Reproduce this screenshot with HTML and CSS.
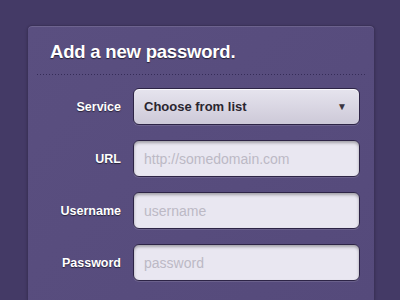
FILE: index.html
```html
<!DOCTYPE html>
<html lang="en">
<head>
    <meta charset="UTF-8">
    <title>Add a new password</title>
    <link rel="stylesheet" href="styles.css">
</head>
<body>
    <div class="panel">
        <h1>Add a new password.</h1>
        <div class="divider"></div>
        <form class="fields">
            <label>Service</label>
            <div class="select">
                <span>Choose from list</span>
                <span class="arrow">&#9660;</span>
            </div>

            <label>URL</label>
            <input type="text" placeholder="http://somedomain.com">

            <label>Username</label>
            <input type="text" placeholder="username">

            <label>Password</label>
            <input type="password" placeholder="password">
        </form>
    </div>
</body>
</html>
```

FILE: styles.css
```css
body {
    margin: 0;
    padding: 25px 25px 0 27px;
    height: 300px;
    box-sizing: border-box;
    overflow: hidden;
    background: #443a66;
    font-family: "Liberation Sans", Arial, sans-serif;
}

.panel {
    width: 348px;
    height: 275px;
    box-sizing: border-box;
    background: linear-gradient(135deg, #5a4f80, #554a7b);
    border: 1px solid #3b3259;
    border-bottom: none;
    border-radius: 5px 5px 0 0;
    box-shadow: inset 0 1px 0 rgba(255, 255, 255, 0.12), 0 1px 3px rgba(0, 0, 0, 0.2);
    padding: 14px 9px 0 9px;
}

.panel h1 {
    margin: 0 0 0 13px;
    font-size: 18.5px;
    font-weight: bold;
    color: #fff;
    letter-spacing: -0.2px;
    text-shadow: 0 1px 1px rgba(0, 0, 0, 0.6);
    line-height: 24px;
}

.divider {
    margin-top: 10px;
    height: 1px;
    background: linear-gradient(to right, #352c58 50%, transparent 50%) repeat-x;
    background-size: 3px 1px;
}

.fields {
    display: grid;
    grid-template-columns: 84px 227px;
    column-gap: 12px;
    row-gap: 15px;
    align-items: center;
    margin-top: 13px;
}

.fields label {
    text-align: right;
    font-size: 12.5px;
    font-weight: bold;
    color: #fff;
    text-shadow: 0 1px 1px rgba(0, 0, 0, 0.55);
}

.select,
.fields input {
    height: 37px;
    box-sizing: border-box;
    border: 1px solid #2d2446;
    border-radius: 6px;
    font-family: "Liberation Sans", Arial, sans-serif;
    font-size: 14px;
}

.select {
    display: flex;
    align-items: center;
    justify-content: space-between;
    padding: 0 12px 0 10px;
    background: linear-gradient(#e6e4ee, #cdc9d8);
    box-shadow: inset 0 1px 0 rgba(255, 255, 255, 0.8), 0 1px 0 rgba(255, 255, 255, 0.12);
    color: #2a2630;
    font-size: 13px;
    font-weight: bold;
}

.select .arrow {
    font-size: 10px;
    color: #3a3540;
}

.fields input {
    width: 100%;
    padding: 0 10px;
    background: #e9e7f1;
    box-shadow: inset 0 2px 3px rgba(0, 0, 0, 0.3), 0 1px 0 rgba(255, 255, 255, 0.12);
    color: #333;
    outline: none;
}

.fields input::placeholder {
    color: #bcb9c5;
}
```
